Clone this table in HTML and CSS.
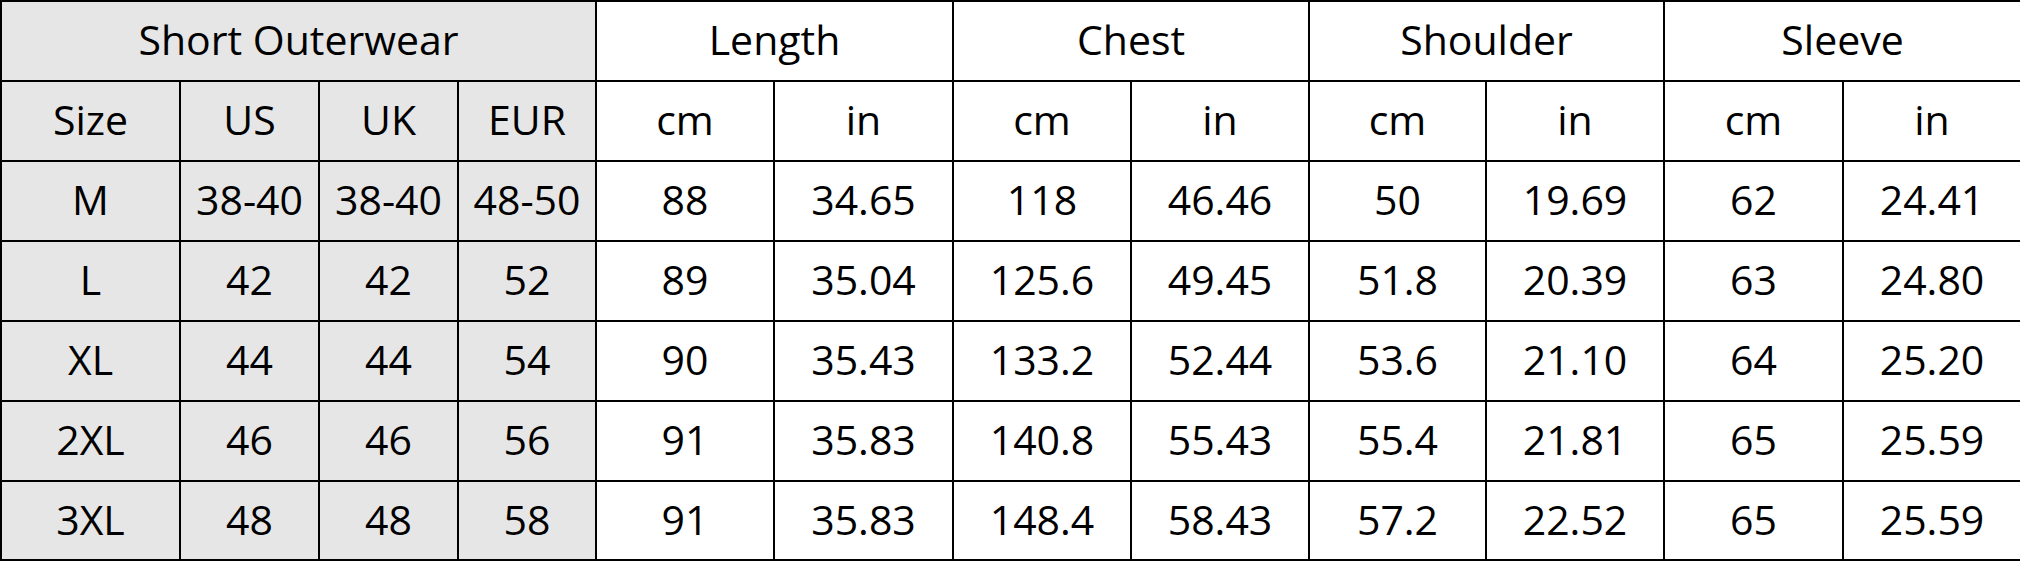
FILE: index.html
```html
<!DOCTYPE html>
<html>
<head>
<meta charset="utf-8">
<link rel="stylesheet" href="styles.css">
</head>
<body>
<div class="sheet">
  <div class="cell grey span4">Short Outerwear</div>
  <div class="cell span2">Length</div>
  <div class="cell span2">Chest</div>
  <div class="cell span2">Shoulder</div>
  <div class="cell span2">Sleeve</div>

  <div class="cell grey">Size</div>
  <div class="cell grey">US</div>
  <div class="cell grey">UK</div>
  <div class="cell grey">EUR</div>
  <div class="cell">cm</div><div class="cell">in</div>
  <div class="cell">cm</div><div class="cell">in</div>
  <div class="cell">cm</div><div class="cell">in</div>
  <div class="cell">cm</div><div class="cell">in</div>

  <div class="cell grey">M</div><div class="cell grey">38-40</div><div class="cell grey">38-40</div><div class="cell grey">48-50</div>
  <div class="cell">88</div><div class="cell">34.65</div><div class="cell">118</div><div class="cell">46.46</div>
  <div class="cell">50</div><div class="cell">19.69</div><div class="cell">62</div><div class="cell">24.41</div>

  <div class="cell grey">L</div><div class="cell grey">42</div><div class="cell grey">42</div><div class="cell grey">52</div>
  <div class="cell">89</div><div class="cell">35.04</div><div class="cell">125.6</div><div class="cell">49.45</div>
  <div class="cell">51.8</div><div class="cell">20.39</div><div class="cell">63</div><div class="cell">24.80</div>

  <div class="cell grey">XL</div><div class="cell grey">44</div><div class="cell grey">44</div><div class="cell grey">54</div>
  <div class="cell">90</div><div class="cell">35.43</div><div class="cell">133.2</div><div class="cell">52.44</div>
  <div class="cell">53.6</div><div class="cell">21.10</div><div class="cell">64</div><div class="cell">25.20</div>

  <div class="cell grey">2XL</div><div class="cell grey">46</div><div class="cell grey">46</div><div class="cell grey">56</div>
  <div class="cell">91</div><div class="cell">35.83</div><div class="cell">140.8</div><div class="cell">55.43</div>
  <div class="cell">55.4</div><div class="cell">21.81</div><div class="cell">65</div><div class="cell">25.59</div>

  <div class="cell grey">3XL</div><div class="cell grey">48</div><div class="cell grey">48</div><div class="cell grey">58</div>
  <div class="cell">91</div><div class="cell">35.83</div><div class="cell">148.4</div><div class="cell">58.43</div>
  <div class="cell">57.2</div><div class="cell">22.52</div><div class="cell">65</div><div class="cell">25.59</div>
</div>
</body>
</html>
```
FILE: styles.css
```css
html, body {
  margin: 0;
  padding: 0;
  background: #ffffff;
}

.sheet {
  display: grid;
  grid-template-columns: 177px 137px 137px 136px 176px 177px 176px 176px 175px 176px 177px 176px;
  grid-template-rows: repeat(6, 78px) 77px;
  gap: 2px;
  padding: 2px;
  width: 2020px;
  box-sizing: border-box;
  background: #000000;
  font-family: "Open Sans", "Noto Sans", sans-serif;
  font-size: 41px;
  color: #000000;
}

.cell {
  background: #ffffff;
  display: flex;
  align-items: center;
  justify-content: center;
  white-space: nowrap;
  line-height: 1;
  padding-bottom: 3px;
}

.grey {
  background: #e6e6e6;
}

.span4 {
  grid-column: span 4;
}

.span2 {
  grid-column: span 2;
}
```
